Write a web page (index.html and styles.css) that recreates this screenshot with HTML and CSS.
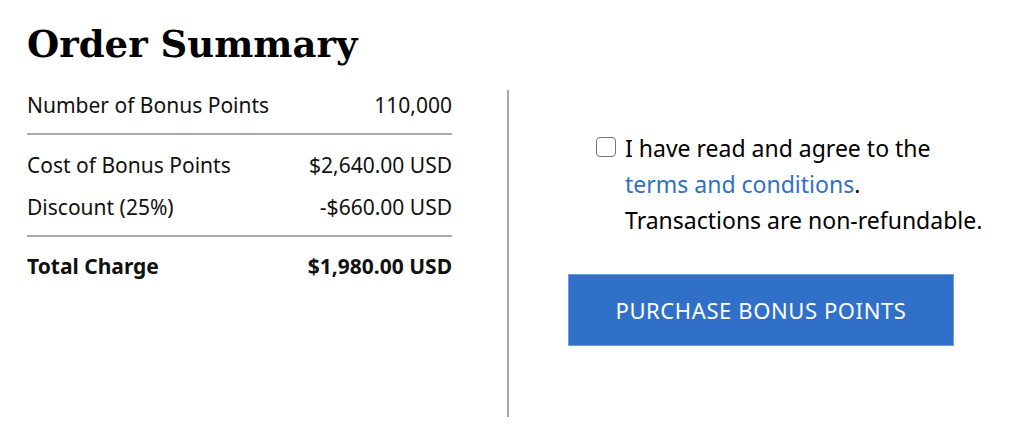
FILE: index.html
```html
<!DOCTYPE html>
<html lang="en">
<head>
<meta charset="utf-8">
<title>Order Summary</title>
<link rel="stylesheet" href="styles.css">
</head>
<body>
<main class="page">
  <h1 class="title">Order Summary</h1>
  <div class="panels">
    <section class="summary">
      <div class="row"><span>Number of Bonus Points</span><span>110,000</span></div>
      <hr class="rule">
      <div class="row"><span>Cost of Bonus Points</span><span>$2,640.00 USD</span></div>
      <div class="row row-tight"><span>Discount (25%)</span><span>-$660.00 USD</span></div>
      <hr class="rule rule-bottom">
      <div class="row row-total"><span>Total Charge</span><span>$1,980.00 USD</span></div>
    </section>
    <section class="checkout">
      <label class="agree">
        <span class="box"></span>
        <span class="agree-text">I have read and agree to the<br><a class="link" href="#">terms and conditions</a>.<br>Transactions are non&#x2011;refundable.</span>
      </label>
      <button class="buy" type="button">PURCHASE BONUS POINTS</button>
    </section>
  </div>
</main>
</body>
</html>
```
FILE: styles.css
```css
html, body {
  margin: 0;
  padding: 0;
  background: #fff;
}
body {
  font-family: "Noto Sans", "Open Sans", sans-serif;
  color: #111;
}
.page {
  padding: 18px 12px 0 27px;
}
.title {
  margin: 0;
  font-family: "DejaVu Serif", serif;
  font-weight: bold;
  font-size: 37px;
  line-height: 52px;
  color: #000;
}
.panels {
  display: flex;
  margin-top: 20px;
}
.summary {
  width: 425px;
  padding-top: 1px;
}
.row {
  display: flex;
  justify-content: space-between;
  font-size: 21px;
  line-height: 28px;
}
.row-tight {
  margin-top: 14px;
}
.rule {
  border: 0;
  height: 2px;
  background: #aaa;
  margin: 14px 0 16px;
}
.rule-bottom {
  margin-bottom: 15px;
}
.row-total {
  font-weight: bold;
}
.checkout {
  flex: 1;
  margin-left: 55px;
  border-left: 2px solid #a8a8a8;
  height: 327px;
  padding-left: 59px;
  padding-top: 40px;
  box-sizing: border-box;
}
.agree {
  display: flex;
  align-items: flex-start;
  margin-left: 28px;
}
.box {
  flex: none;
  width: 20px;
  height: 20px;
  border: 1.5px solid #767676;
  border-radius: 4px;
  box-sizing: border-box;
  margin-top: 7px;
  margin-right: 9px;
}
.agree-text {
  font-size: 23px;
  line-height: 36px;
  color: #000;
}
.link {
  color: #2f6fc9;
  text-decoration: none;
}
.buy {
  display: block;
  margin-top: 36px;
  width: 386px;
  height: 72px;
  border: 1px solid #6a9ee0;
  background: #3170c8;
  color: #fff;
  font-family: "Noto Sans", "Open Sans", sans-serif;
  font-size: 22px;
  letter-spacing: 0.6px;
}
```
